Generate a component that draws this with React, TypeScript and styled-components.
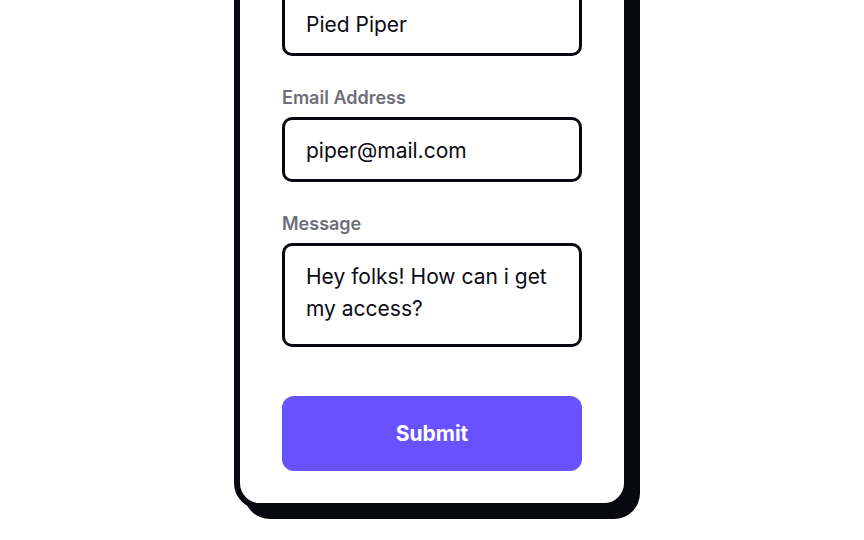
import React from 'react';
import styled, { createGlobalStyle } from 'styled-components';

const GlobalStyle = createGlobalStyle`
  html, body {
    margin: 0;
    padding: 0;
    background: #ffffff;
    font-family: Inter, 'Noto Sans', sans-serif;
  }
  * {
    box-sizing: border-box;
  }
`;

const Page = styled.div`
  height: 100vh;
  overflow: hidden;
  display: flex;
  flex-direction: column;
  align-items: center;
  justify-content: flex-end;
  padding-bottom: 31px;
`;

const Card = styled.form`
  flex-shrink: 0;
  width: 396px;
  background: #ffffff;
  border: 6px solid #08080f;
  border-radius: 26px;
  box-shadow: 10px 10px 0 #08080f;
  padding: 32px 42px 32px;
  display: flex;
  flex-direction: column;
`;

const Field = styled.div`
  display: flex;
  flex-direction: column;
  gap: 9px;
  & + & {
    margin-top: 32px;
  }
`;

const Label = styled.label`
  font-size: 18px;
  line-height: 20px;
  font-weight: 600;
  color: #6e6e78;
`;

const Input = styled.input`
  height: 65px;
  width: 100%;
  border: 3px solid #08080f;
  border-radius: 10px;
  padding: 1px 21px 0;
  font-family: inherit;
  font-size: 21px;
  color: #0b0b14;
  background: #ffffff;
  outline: none;
`;

const TextArea = styled.textarea`
  height: 104px;
  width: 100%;
  border: 3px solid #08080f;
  border-radius: 10px;
  padding: 15px 21px 13px;
  font-family: inherit;
  font-size: 21px;
  line-height: 32px;
  color: #0b0b14;
  background: #ffffff;
  resize: none;
  outline: none;
  overflow: hidden;
`;

const SubmitButton = styled.button`
  margin-top: 49px;
  height: 75px;
  width: 100%;
  border: none;
  border-radius: 12px;
  background: #6851ff;
  color: #ffffff;
  font-family: inherit;
  font-size: 21px;
  font-weight: 700;
  cursor: pointer;
`;

export default function App(): JSX.Element {
  return (
    <>
      <GlobalStyle />
      <Page>
        <Card onSubmit={(e) => e.preventDefault()}>
          <Field>
            <Label htmlFor="company">Company</Label>
            <Input id="company" defaultValue="Pied Piper" />
          </Field>
          <Field>
            <Label htmlFor="email">Email Address</Label>
            <Input id="email" type="email" defaultValue="piper@mail.com" />
          </Field>
          <Field>
            <Label htmlFor="message">Message</Label>
            <TextArea id="message" defaultValue="Hey folks! How can i get my access?" />
          </Field>
          <SubmitButton type="submit">Submit</SubmitButton>
        </Card>
      </Page>
    </>
  );
}
